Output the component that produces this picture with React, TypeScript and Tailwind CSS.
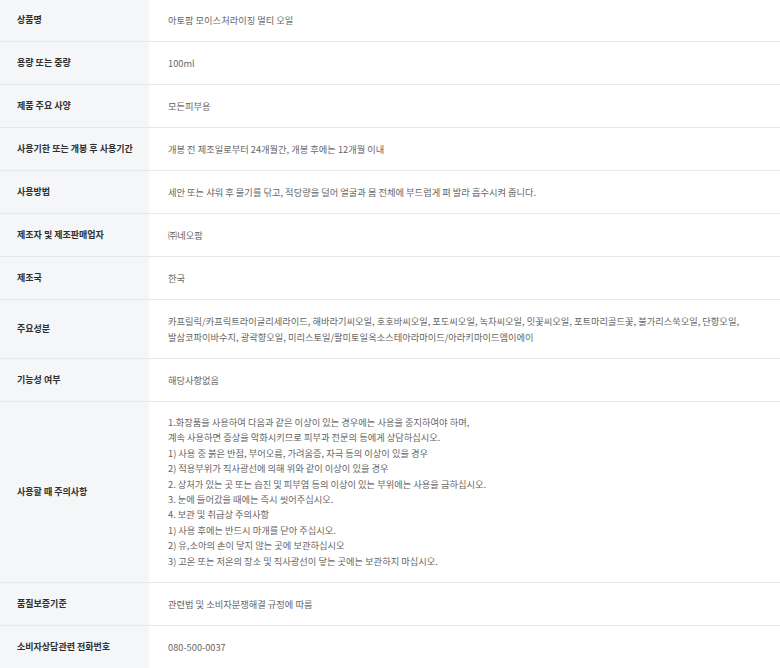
const rows: { label: string; value: React.ReactNode }[] = [
  { label: '상품명', value: '아토팜 모이스처라이징 멀티 오일' },
  { label: '용량 또는 중량', value: '100ml' },
  { label: '제품 주요 사양', value: '모든피부용' },
  { label: '사용기한 또는 개봉 후 사용기간', value: '개봉 전 제조일로부터 24개월간, 개봉 후에는 12개월 이내' },
  {
    label: '사용방법',
    value: '세안 또는 샤워 후 물기를 닦고, 적당량을 덜어 얼굴과 몸 전체에 부드럽게 펴 발라 흡수시켜 줍니다.',
  },
  { label: '제조자 및 제조판매업자', value: '㈜네오팜' },
  { label: '제조국', value: '한국' },
  {
    label: '주요성분',
    value: (
      <>
        카프릴릭/카프릭트라이글리세라이드, 해바라기씨오일, 호호바씨오일, 포도씨오일, 녹차씨오일, 잇꽃씨오일, 포트마리골드꽃, 불가리스쑥오일, 단향오일,
        <br />
        발삼코파이바수지, 광곽향오일, 미리스토일/팔미토일옥소스테아라마이드/아라키마이드엠이에이
      </>
    ),
  },
  { label: '기능성 여부', value: '해당사항없음' },
  {
    label: '사용할 때 주의사항',
    value: (
      <div className="leading-[15.4px]">
        <p>1.화장품을 사용하여 다음과 같은 이상이 있는 경우에는 사용을 중지하여야 하며,</p>
        <p>계속 사용하면 증상을 악화시키므로 피부과 전문의 등에게 상담하십시오.</p>
        <p>1) 사용 중 붉은 반점, 부어오름, 가려움증, 자극 등의 이상이 있을 경우</p>
        <p>2) 적용부위가 직사광선에 의해 위와 같이 이상이 있을 경우</p>
        <p>2. 상처가 있는 곳 또는 습진 및 피부염 등의 이상이 있는 부위에는 사용을 금하십시오.</p>
        <p>3. 눈에 들어갔을 때에는 즉시 씻어주십시오.</p>
        <p>4. 보관 및 취급상 주의사항</p>
        <p>1) 사용 후에는 반드시 마개를 닫아 주십시오.</p>
        <p>2) 유,소아의 손이 닿지 않는 곳에 보관하십시오</p>
        <p>3) 고온 또는 저온의 장소 및 직사광선이 닿는 곳에는 보관하지 마십시오.</p>
      </div>
    ),
  },
  { label: '품질보증기준', value: '관련법 및 소비자분쟁해결 규정에 따름' },
  { label: '소비자상담관련 전화번호', value: '080-500-0037' },
];

export default function App() {
  return (
    <div
      className="w-[780px] bg-white -mt-px"
      style={{ fontFamily: '"Noto Sans CJK KR", "Noto Sans", sans-serif' }}
    >
      {rows.map((row) => (
        <div key={row.label} className="flex border-b border-[#e8e8e8]">
          {/* label cell */}
          <div className="w-[149px] shrink-0 bg-[#f4f6f7] flex items-center pl-[17px] text-[9px] font-bold text-[#2f2f2f]">
            {row.label}
          </div>
          {/* value cell */}
          <div className="flex-1 py-[13px] pl-[19px] pr-2 text-[9.25px] leading-[16px] text-[#666]">
            {row.value}
          </div>
        </div>
      ))}
    </div>
  );
}
